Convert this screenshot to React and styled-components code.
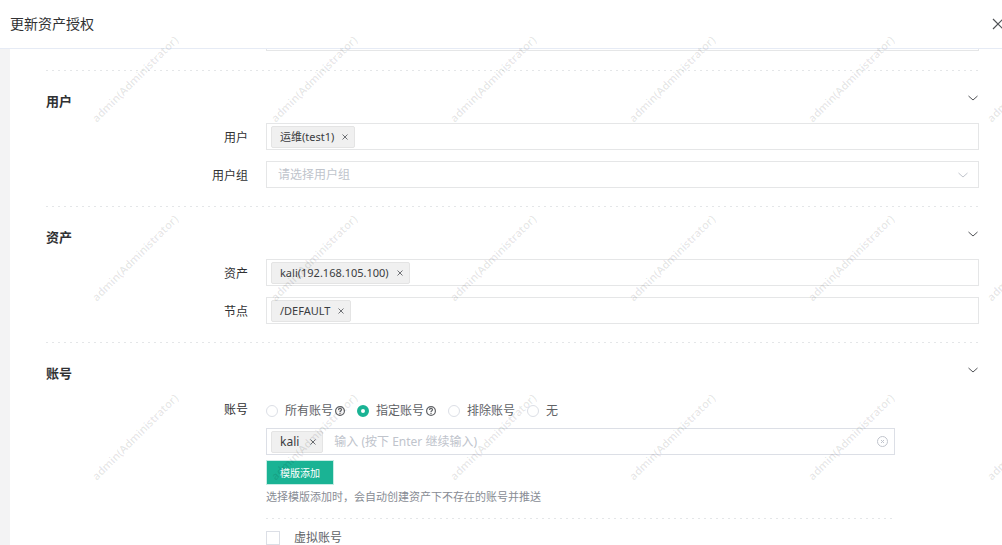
import React, { useState } from "react";
import styled, { createGlobalStyle } from "styled-components";

const GlobalStyle = createGlobalStyle`
  *, *::before, *::after { box-sizing: border-box; }
  body {
    margin: 0;
    overflow: hidden;
    background: #fff;
    color: #303133;
    font: 12px/18px "Noto Sans", "Noto Sans CJK SC", sans-serif;
  }
  button, input, select { font: inherit; color: inherit; }
`;

const Drawer = styled.div`
  position: relative;
  display: flex;
  flex-direction: column;
  height: 100vh;
  overflow: hidden;
`;

const Header = styled.header`
  display: flex;
  flex: none;
  align-items: center;
  justify-content: space-between;
  height: 49px;
  padding-left: 10px;
  border-bottom: 1px solid #e6ebf5;
`;

const Title = styled.h1`
  margin: 0;
  font-size: 14px;
  line-height: 20px;
  font-weight: 400;
  color: #303133;
`;

const IconButton = styled.button`
  display: flex;
  flex: none;
  padding: 0;
  border: 0;
  background: none;
  color: ${(p) => p.$color || "#505256"};
  cursor: pointer;
`;

const CloseButton = styled(IconButton)`
  margin-right: -2px;
`;

const Body = styled.main`
  flex: 1;
  min-height: 0;
  overflow: hidden;
  padding-left: 10px;
  background: #f3f3f4;
`;

const Form = styled.form`
  min-height: 100%;
  margin-top: -25px;
  padding: 0 23px 40px 36px;
  background: #fff;
`;

const Section = styled.section`
  display: flex;
  flex-direction: column;
  gap: 11px;
  padding-bottom: ${(p) => p.$bottom || 18}px;
`;

const Divider = styled.hr`
  width: 100%;
  height: 1px;
  margin: 0;
  border: 0;
  background: repeating-linear-gradient(90deg, #e4e6e8 0 2px, transparent 2px 6px);
`;

const SectionHead = styled.div`
  display: flex;
  align-items: center;
  justify-content: space-between;
  height: 41px;
  padding-top: 13px;
`;

const SectionTitle = styled.h2`
  margin: 0;
  padding-top: 6px;
  font-size: 13px;
  line-height: 20px;
  font-weight: 600;
  color: #303133;
`;

const Row = styled.div`
  display: grid;
  grid-template-columns: 202px minmax(0, 1fr);
  column-gap: 18px;
  padding-right: ${(p) => (p.$narrow ? 84 : 0)}px;
`;

const Label = styled.label`
  padding-top: 6px;
  text-align: right;
`;

const Box = styled.div`
  display: flex;
  align-items: center;
  height: 27px;
  padding: 0 6px 0 4px;
  border: 1px solid ${(p) => (p.$strong ? "#dcdfe6" : "#e5e6e7")};
  background: #fff;
`;

const BareInput = styled.input`
  flex: 1;
  min-width: 0;
  height: 24px;
  padding: 0 11px;
  border: 0;
  outline: 0;
  background: none;
  &::placeholder { color: #c0c4cc; opacity: 1; }
`;

const Tag = styled.span`
  display: flex;
  align-items: center;
  gap: ${(p) => (p.$large ? 11 : 8)}px;
  height: 22px;
  padding: 0 6px 0 8px;
  border: 1px solid #e4e4e4;
  border-radius: 2px;
  background: #f0f0f0;
  color: #3a3c40;
  font-size: ${(p) => (p.$large ? 12 : 11)}px;
  white-space: nowrap;
`;

const SelectWrap = styled.div`
  display: grid;
  align-items: center;
  > * { grid-area: 1 / 1; }
  > svg { justify-self: end; margin-right: 10px; color: #c0c4cc; pointer-events: none; }
`;

const Select = styled.select`
  width: 100%;
  height: 27px;
  padding: 0 30px 0 11px;
  border: 1px solid #e5e6e7;
  border-radius: 0;
  appearance: none;
  background: #fff;
  color: #c0c4cc;
`;

const Stack = styled.div`
  display: flex;
  flex-direction: column;
`;

const RadioGroup = styled.div`
  display: flex;
  align-items: center;
  gap: 12px;
  height: 20px;
  margin: 6px 0 7px;
  color: #606266;
`;

const RadioItem = styled.div`
  display: flex;
  align-items: center;
  gap: 2px;
  label { display: flex; align-items: center; gap: 7px; }
`;

const Radio = styled.input.attrs({ type: "radio" })`
  width: 12px;
  height: 12px;
  margin: 0;
  border: 1px solid #dcdfe6;
  border-radius: 50%;
  appearance: none;
  background: #fff;
  &:checked { border: 4px solid #1ab394; }
`;

const Checkbox = styled.input.attrs({ type: "checkbox" })`
  width: 14px;
  height: 14px;
  margin: 0;
  border: 1px solid #dcdfe6;
  appearance: none;
  background: #fff;
  &:checked { background: #1ab394; }
`;

const CheckLabel = styled.label`
  display: flex;
  align-items: center;
  gap: 14px;
  margin-top: 10px;
  color: #606266;
`;

const PrimaryButton = styled.button`
  align-self: flex-start;
  height: 25px;
  margin: 5px 0 3px;
  padding: 0 13px;
  border: 1px solid #c6ece4;
  background: #1ab394;
  color: #fff;
  font-size: 10px;
  line-height: 16px;
  cursor: pointer;
`;

const Hint = styled.p`
  margin: 0 0 13px;
  font-size: 11px;
  line-height: 17px;
  color: #888c94;
`;

const WatermarkLayer = styled.div`
  position: absolute;
  top: -11px;
  left: 46px;
  display: grid;
  grid-template-columns: repeat(6, 179px);
  grid-auto-rows: 179px;
  place-items: center;
  color: rgba(0, 0, 0, 0.1);
  font-size: 11px;
  font-weight: 600;
  pointer-events: none;
  user-select: none;
  span { transform: rotate(-45deg); }
`;

const Chevron = () => (
  <svg width="12" height="12" viewBox="0 0 12 12" fill="none" stroke="currentColor" aria-hidden="true">
    <path d="M1.5 4L6 8l4.5-4" />
  </svg>
);

const Cross = ({ size, width = 1 }) => (
  <svg width={size} height={size} viewBox="0 0 12 12" fill="none" stroke="currentColor" strokeWidth={width} aria-hidden="true">
    <path d="M1 1l10 10M11 1L1 11" />
  </svg>
);

const Question = () => (
  <svg width="10" height="10" viewBox="0 0 20 20" fill="none" stroke="#606266" strokeWidth="2.4" aria-hidden="true">
    <circle cx="10" cy="10" r="8.8" />
    <path d="M7 8c0-4 6-4 6-.5 0 2-3 2-3 4.5M10 13.5V16" />
  </svg>
);

const CircleCross = () => (
  <svg width="11" height="11" viewBox="0 0 11 11" fill="none" stroke="currentColor" aria-hidden="true">
    <circle cx="5.5" cy="5.5" r="5" />
    <path d="M4 4l3 3M7 4L4 7" />
  </svg>
);

function Removable({ text, large }) {
  return (
    <Tag $large={large}>
      {text}
      <IconButton type="button" aria-label={`移除 ${text}`} $color="#606266">
        <Cross size={6} width={1.8} />
      </IconButton>
    </Tag>
  );
}

function TagField({ id, label, tag }) {
  return (
    <Row>
      <Label htmlFor={id}>{label}</Label>
      <Box>
        <Removable text={tag} />
        <BareInput id={id} />
      </Box>
    </Row>
  );
}

function Heading({ text }) {
  return (
    <SectionHead>
      <SectionTitle>{text}</SectionTitle>
      <IconButton type="button" aria-label={`收起${text}`}>
        <Chevron />
      </IconButton>
    </SectionHead>
  );
}

const accountModes = [
  { value: "all", text: "所有账号", help: true },
  { value: "spec", text: "指定账号", help: true },
  { value: "exclude", text: "排除账号" },
  { value: "none", text: "无" },
];

export default function App() {
  const [mode, setMode] = useState("spec");
  return (
    <Drawer>
      <GlobalStyle />
      <Header>
        <Title>更新资产授权</Title>
        <CloseButton type="button" aria-label="关闭">
          <Cross size={12} width={1.2} />
        </CloseButton>
      </Header>
      <Body>
        <Form onSubmit={(e) => e.preventDefault()}>
          <Section $bottom={19}>
            <Row>
              <span />
              <Box>
                <BareInput aria-label="名称" />
              </Box>
            </Row>
          </Section>
          <Divider />
          <Section>
            <Heading text="用户" />
            <TagField id="users" label="用户" tag="运维(test1)" />
            <Row>
              <Label htmlFor="groups">用户组</Label>
              <SelectWrap>
                <Select id="groups" defaultValue="">
                  <option value="">请选择用户组</option>
                </Select>
                <Chevron />
              </SelectWrap>
            </Row>
          </Section>
          <Divider />
          <Section>
            <Heading text="资产" />
            <TagField id="assets" label="资产" tag="kali(192.168.105.100)" />
            <TagField id="nodes" label="节点" tag="/DEFAULT" />
          </Section>
          <Divider />
          <Section>
            <Heading text="账号" />
            <Row $narrow>
              <Label htmlFor="accounts">账号</Label>
              <Stack>
                <RadioGroup role="radiogroup" aria-label="账号">
                  {accountModes.map((m) => (
                    <RadioItem key={m.value}>
                      <label>
                        <Radio
                          name="mode"
                          value={m.value}
                          checked={mode === m.value}
                          onChange={() => setMode(m.value)}
                        />
                        {m.text}
                      </label>
                      {m.help && <Question />}
                    </RadioItem>
                  ))}
                </RadioGroup>
                <Box $strong>
                  <Removable text="kali" large />
                  <BareInput id="accounts" placeholder="输入 (按下 Enter 继续输入)" />
                  <IconButton type="button" aria-label="清空" $color="#c0c4cc">
                    <CircleCross />
                  </IconButton>
                </Box>
                <PrimaryButton type="button">模版添加</PrimaryButton>
                <Hint>选择模版添加时，会自动创建资产下不存在的账号并推送</Hint>
                <Divider />
                <CheckLabel>
                  <Checkbox />
                  虚拟账号
                </CheckLabel>
              </Stack>
            </Row>
          </Section>
        </Form>
      </Body>
      <WatermarkLayer aria-hidden="true">
        {Array.from({ length: 18 }, (_, i) => (
          <span key={i}>admin(Administrator)</span>
        ))}
      </WatermarkLayer>
    </Drawer>
  );
}
